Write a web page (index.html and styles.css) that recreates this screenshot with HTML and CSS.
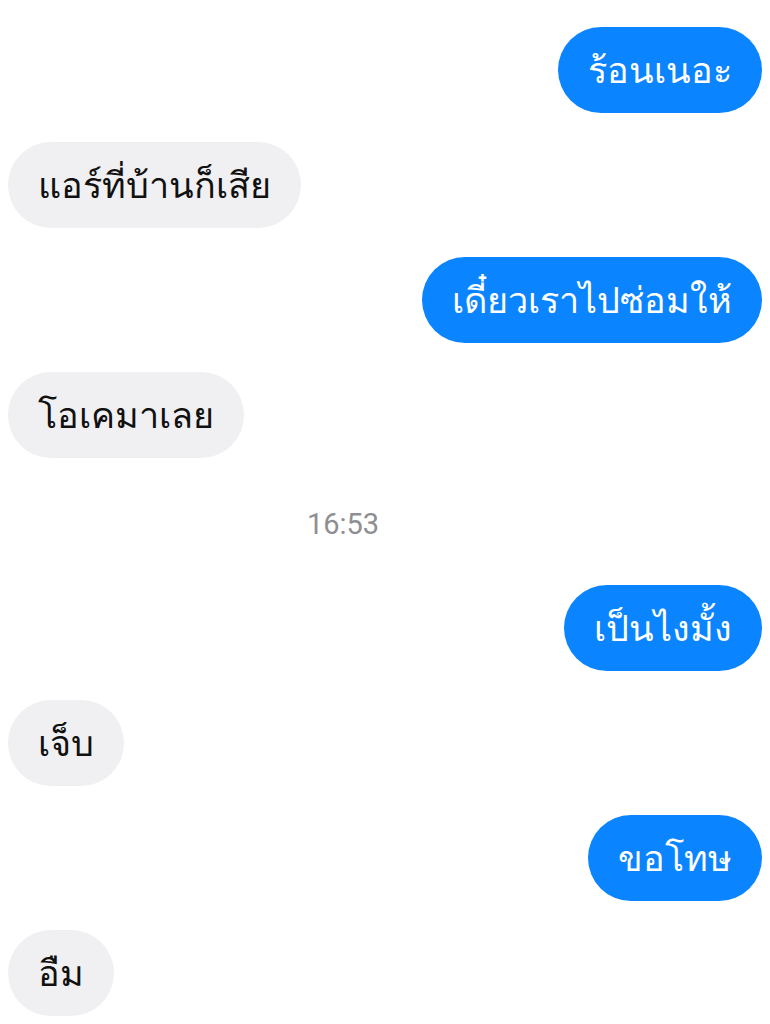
FILE: index.html
```html
<!DOCTYPE html>
<html>
<head>
<meta charset="utf-8">
<link rel="stylesheet" href="styles.css">
</head>
<body>
<div class="chat">
  <div class="row out"><div class="bubble">ร้อนเนอะ</div></div>
  <div class="row in"><div class="bubble">แอร์ที่บ้านก็เสีย</div></div>
  <div class="row out"><div class="bubble">เดี๋ยวเราไปซ่อมให้</div></div>
  <div class="row in"><div class="bubble">โอเคมาเลย</div></div>
  <div class="time">16:53</div>
  <div class="row out"><div class="bubble">เป็นไงมั้ง</div></div>
  <div class="row in"><div class="bubble">เจ็บ</div></div>
  <div class="row out"><div class="bubble">ขอโทษ</div></div>
  <div class="row in"><div class="bubble">อืม</div></div>
</div>
</body>
</html>
```
FILE: styles.css
```css
html, body {
  margin: 0;
  padding: 0;
  background: #ffffff;
}
.chat {
  display: flex;
  flex-direction: column;
  gap: 29px;
  padding: 27px 8px 0 8px;
  font-family: "Noto Sans", sans-serif;
}
.row {
  display: flex;
}
.row.out {
  justify-content: flex-end;
}
.row.in {
  justify-content: flex-start;
}
.bubble {
  height: 86px;
  box-sizing: border-box;
  padding: 0 30px;
  border-radius: 43px;
  display: flex;
  align-items: center;
  font-size: 36px;
  white-space: nowrap;
}
.out .bubble {
  background: #0a84ff;
  color: #ffffff;
}
.in .bubble {
  background: #f0f0f2;
  color: #111111;
}
.time {
  text-align: center;
  padding-right: 84px;
  font-family: Roboto, sans-serif;
  font-size: 29px;
  color: #8e8e93;
  margin: 21px 0 16px;
  line-height: 32px;
}
```
